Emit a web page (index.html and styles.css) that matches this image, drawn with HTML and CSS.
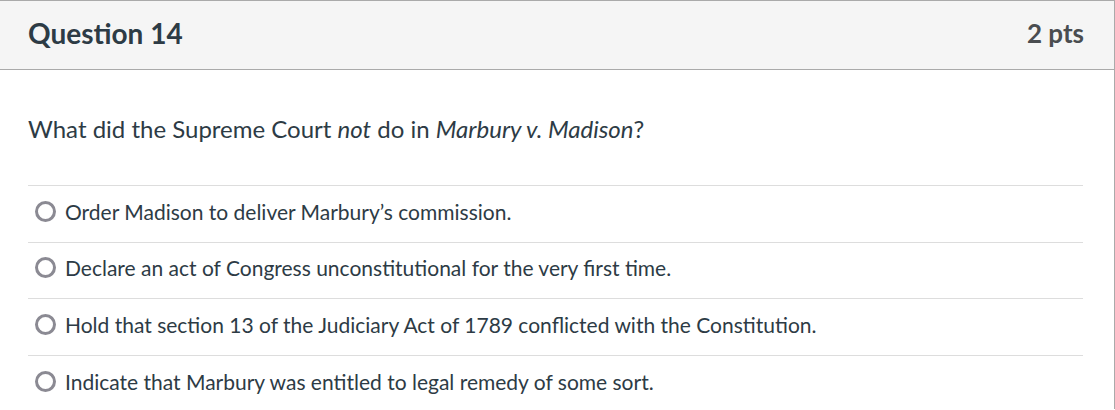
FILE: index.html
```html
<!DOCTYPE html>
<html>
<head>
<meta charset="utf-8">
<link rel="stylesheet" href="styles.css">
</head>
<body>
<div class="question">
  <div class="header">
    <h2 class="title">Question 14</h2>
    <div class="pts">2 pts</div>
  </div>
  <div class="content">
    <p class="text">What did the Supreme Court <em>not</em> do in <em>Marbury v. Madison</em>?</p>
    <div class="answers">
      <div class="answer"><span class="radio"></span><span class="label">Order Madison to deliver Marbury’s commission.</span></div>
      <div class="answer"><span class="radio"></span><span class="label">Declare an act of Congress unconstitutional for the very first time.</span></div>
      <div class="answer"><span class="radio"></span><span class="label">Hold that section 13 of the Judiciary Act of 1789 conflicted with the Constitution.</span></div>
      <div class="answer"><span class="radio"></span><span class="label">Indicate that Marbury was entitled to legal remedy of some sort.</span></div>
    </div>
  </div>
</div>
</body>
</html>
```
FILE: styles.css
```css
html, body {
  margin: 0;
  padding: 0;
  background: #fff;
}
body {
  font-family: Lato, "Noto Sans", sans-serif;
  color: #2d3b45;
  width: 1115px;
  height: 410px;
  overflow: hidden;
}
.question {
  border-top: 1px solid #aaaaaa;
  border-right: 1px solid #aaaaaa;
  height: 409px;
  box-sizing: border-box;
}
.header {
  background: #f5f5f5;
  border-bottom: 1px solid #aaaaaa;
  display: flex;
  align-items: center;
  justify-content: space-between;
  padding: 0 30px 5px 28px;
  box-sizing: border-box;
  height: 69px;
}
.title {
  margin: 0;
  font-size: 28px;
  font-weight: 700;
  color: #2d3b45;
}
.pts {
  font-size: 26px;
  font-weight: 700;
  color: #4a4d50;
}
.content {
  padding: 0 31px 0 28px;
}
.text {
  margin: 0;
  padding-top: 43px;
  padding-bottom: 40px;
  font-size: 24px;
  line-height: 32px;
}
.answer {
  border-top: 1px solid #dddddd;
  height: 56.67px;
  box-sizing: border-box;
  padding-bottom: 5px;
  display: flex;
  align-items: center;
  padding-left: 7px;
}
.radio {
  width: 15px;
  height: 15px;
  border: 3px solid #8b8a93;
  border-radius: 50%;
  flex: none;
  margin-right: 9px;
}
.label {
  font-size: 21px;
}
```
